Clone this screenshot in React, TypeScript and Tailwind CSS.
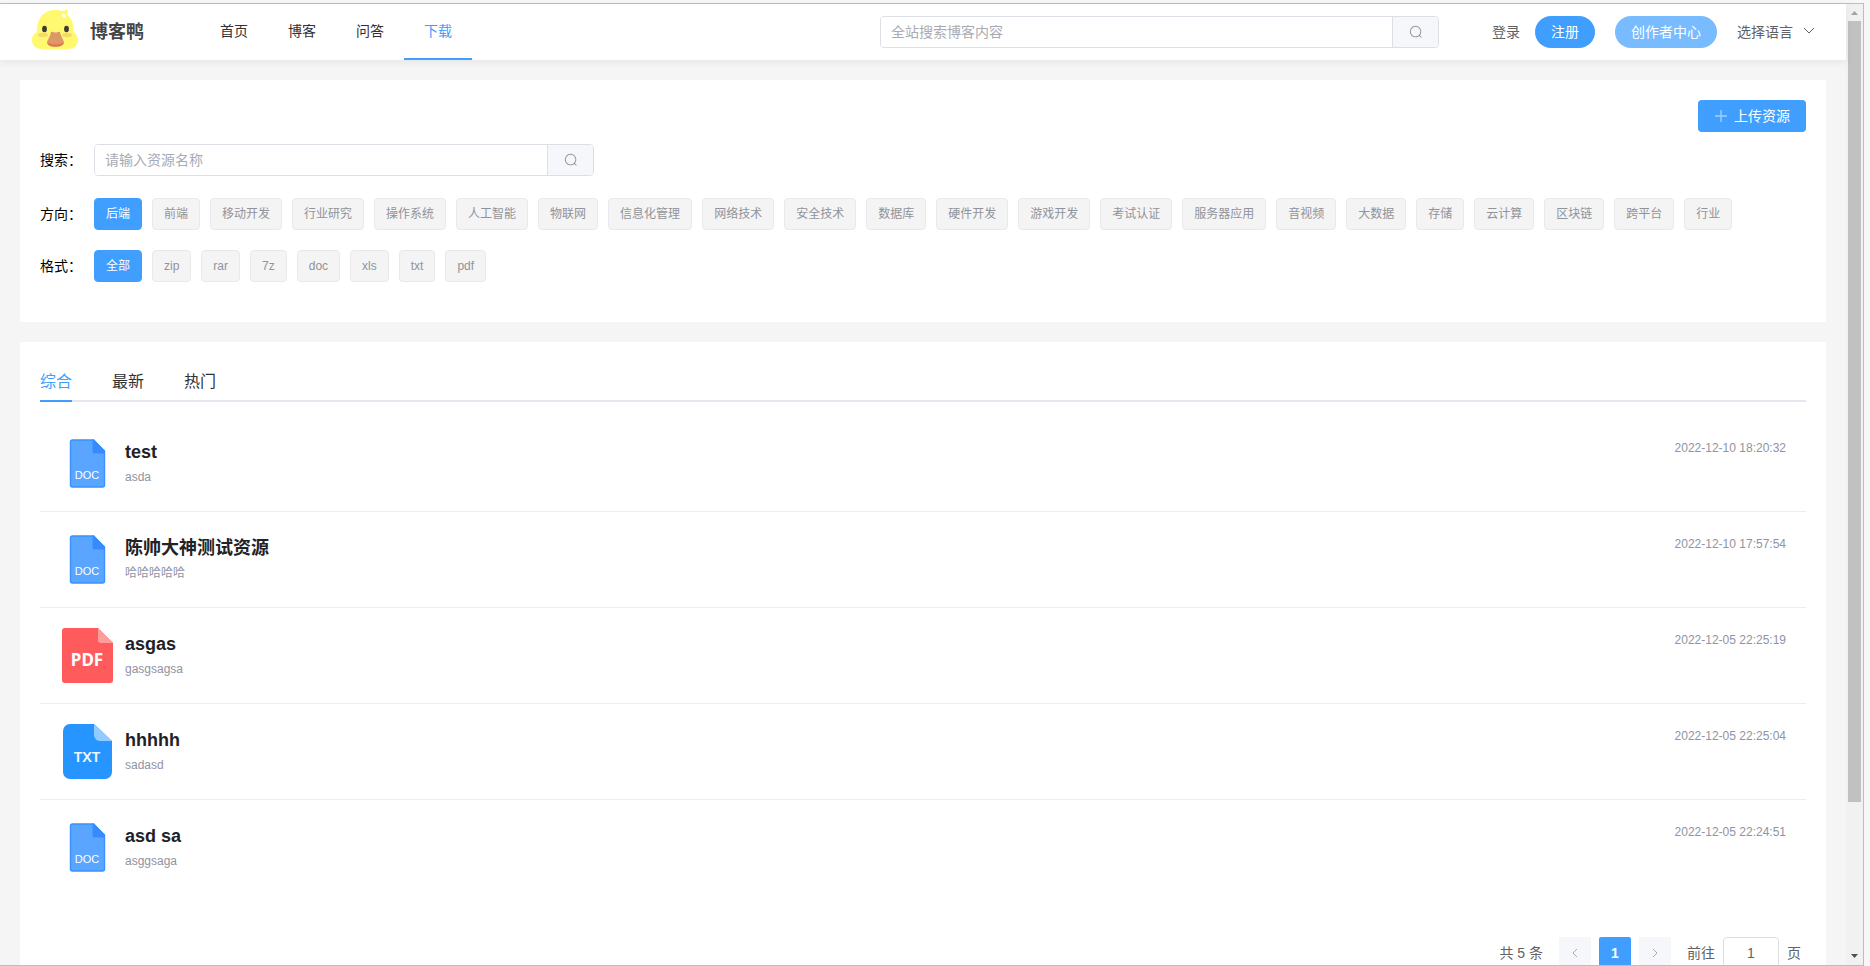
import React, { useState } from 'react';

const directions = [
  '后端', '前端', '移动开发', '行业研究', '操作系统', '人工智能', '物联网', '信息化管理',
  '网络技术', '安全技术', '数据库', '硬件开发', '游戏开发', '考试认证', '服务器应用',
  '音视频', '大数据', '存储', '云计算', '区块链', '跨平台', '行业',
];
const formats = ['全部', 'zip', 'rar', '7z', 'doc', 'xls', 'txt', 'pdf'];
const navs = ['首页', '博客', '问答', '下载'];
const sorts = ['综合', '最新', '热门'];

const resources = [
  { id: 1, type: 'doc', title: 'test', desc: 'asda', time: '2022-12-10 18:20:32' },
  { id: 2, type: 'doc', title: '陈帅大神测试资源', desc: '哈哈哈哈哈', time: '2022-12-10 17:57:54' },
  { id: 3, type: 'pdf', title: 'asgas', desc: 'gasgsagsa', time: '2022-12-05 22:25:19' },
  { id: 4, type: 'txt', title: 'hhhhh', desc: 'sadasd', time: '2022-12-05 22:25:04' },
  { id: 5, type: 'doc', title: 'asd sa', desc: 'asggsaga', time: '2022-12-05 22:24:51' },
];

const DuckLogo: React.FC = () => (
  <svg width="46" height="48" viewBox="0 0 46 48" aria-hidden="true">
    <path
      d="M35 0.5C36 3 36 5 35 6.500C39.500 10 41.700 15 41.500 24C44.500 25.500 46 28.500 46 32C46 37.500 42 41 37 41H9C4 41 0 37.500 0 32C0 28.500 1.500 25.500 5 24C4.300 10 12 2 23 2C26 2 28 2.300 30 3C32 2.800 34 2 35 0.5Z"
      fill="#fff970"
    />
    <path d="M29.500 6.500C31.500 5 34 6.500 34 8.500C33.500 11 30.500 10 29.500 6.500Z" fill="#fff" />
    <ellipse cx="11" cy="27" rx="5" ry="2.200" fill="#fad868" />
    <ellipse cx="35" cy="27" rx="5" ry="2.200" fill="#fad868" />
    <ellipse cx="12.500" cy="21" rx="2.400" ry="3.200" fill="#3c3b34" />
    <ellipse cx="34.500" cy="21" rx="2.400" ry="3.200" fill="#3c3b34" />
    <path d="M19 24C20.500 23 22 24.500 23.500 24.500C25 24.500 26.500 23 28 24C29 28 30 30 31.500 32.500C33 37 28 38.500 23.500 38.500C19 38.500 14 37 15.500 32.500C17 30 18 28 19 24Z" fill="#dd986a" />
    <path d="M15.200 34C18 37.300 29 37.300 31.800 34C32 37.500 28 38.700 23.500 38.700C19 38.700 15 37.500 15.200 34Z" fill="#d97c48" />
  </svg>
);

const SearchIcon: React.FC = () => (
  <svg width="14" height="14" viewBox="0 0 1024 1024" fill="currentColor" aria-hidden="true">
    <path d="m795.904 750.720 124.992 124.928a32 32 0 0 1-45.248 45.248L750.656 795.904a416 416 0 1 1 45.248-45.248zM480 832a352 352 0 1 0 0-704 352 352 0 0 0 0 704z" />
  </svg>
);

const FileIcon: React.FC<{ type: string }> = ({ type }) => {
  if (type === 'pdf') {
    return (
      <svg className="shrink-0" width="55" height="55" viewBox="0 0 55 55" role="img" aria-label="pdf">
        <path d="M5 0H38L53 15V52a3 3 0 0 1-3 3H5a3 3 0 0 1-3-3V3a3 3 0 0 1 3-3Z" fill="#ff5b5c" />
        <path d="M38 0L53 15H41a3 3 0 0 1-3-3Z" fill="#ff9c9c" />
        <text x="27" y="38" textAnchor="middle" fontFamily="'Noto Sans', sans-serif" fontWeight="700" fontSize="17" fill="#fff">PDF</text>
      </svg>
    );
  }
  if (type === 'txt') {
    return (
      <svg className="shrink-0" width="55" height="55" viewBox="0 0 55 55" role="img" aria-label="txt">
        <path d="M10 0H34L52 17V48a7 7 0 0 1-7 7H10a7 7 0 0 1-7-7V7a7 7 0 0 1 7-7Z" fill="#2795ff" />
        <path d="M34 0L52 17H40a6 6 0 0 1-6-6Z" fill="#93caff" />
        <text x="27" y="38" textAnchor="middle" fontFamily="'Noto Sans', sans-serif" fontWeight="600" fontSize="15" fill="#f0f8ff">TXT</text>
      </svg>
    );
  }
  return (
    <svg className="shrink-0" width="55" height="55" viewBox="0 0 55 55" role="img" aria-label="doc">
      <path d="M12.500 4H33.500L44.500 15V49a2 2 0 0 1-2 2H12.500a2 2 0 0 1-2-2V6a2 2 0 0 1 2-2Z" fill="#5aa5ff" stroke="#3c8fff" strokeWidth="1.400" />
      <path d="M32.500 3.500H34L45 15V17.500H34a1.500 1.500 0 0 1-1.500-1.500Z" fill="#368cff" />
      <text x="27" y="43" textAnchor="middle" fontFamily="'Liberation Sans', sans-serif" fontSize="11" fill="#fff">DOC</text>
    </svg>
  );
};

const SearchBox: React.FC<{ id: string; label: string; placeholder: string }> = ({ id, label, placeholder }) => (
  <div className="flex h-8 w-full overflow-hidden rounded border border-[#dcdfe6]">
    <input
      id={id}
      aria-label={label}
      className="min-w-0 flex-1 bg-white px-[10px] text-sm text-[#606266] outline-none placeholder:text-[#a8abb2]"
      placeholder={placeholder}
    />
    <button
      aria-label={label}
      className="flex w-[46px] items-center justify-center border-l border-[#dcdfe6] bg-[#f5f7fa] text-[#909399]"
    >
      <SearchIcon />
    </button>
  </div>
);

interface TagRowProps {
  label: string;
  items: string[];
  value: string;
  onChange: (v: string) => void;
}

const TagRow: React.FC<TagRowProps> = ({ label, items, value, onChange }) => (
  <div className="flex">
    <span className="w-[54px] shrink-0 text-sm leading-8 text-black">{label}</span>
    <div className="flex flex-wrap gap-[10px]">
      {items.map((item) => (
        <button
          key={item}
          onClick={() => onChange(item)}
          className={
            item === value
              ? 'h-8 rounded border border-[#409eff] bg-[#409eff] px-[11px] text-xs text-white'
              : 'h-8 rounded border border-[#e9e9eb] bg-[#f4f4f5] px-[11px] text-xs text-[#909399]'
          }
        >
          {item}
        </button>
      ))}
    </div>
  </div>
);

const Header: React.FC = () => {
  const [active, setActive] = useState('下载');

  return (
    <header className="relative z-10 flex h-14 shrink-0 items-center bg-white pr-[31px] pl-8 shadow-[0_2px_8px_rgba(0,0,0,0.07)]">
      <DuckLogo />
      <span className="ml-3 text-lg font-bold text-[#444]">博客鸭</span>
      <nav className="ml-14 flex h-full">
        {navs.map((nav) => (
          <a
            key={nav}
            href="#"
            onClick={() => setActive(nav)}
            className={
              nav === active
                ? 'flex items-center border-b-2 border-[#409eff] px-5 text-sm text-[#409eff]'
                : 'flex items-center border-b-2 border-transparent px-5 text-sm text-[#303133]'
            }
          >
            {nav}
          </a>
        ))}
      </nav>
      <div className="ml-auto w-[559px]">
        <SearchBox id="site-search" label="全站搜索" placeholder="全站搜索博客内容" />
      </div>
      <a href="#" className="ml-[53px] text-sm text-[#606266]">登录</a>
      <button className="ml-[15px] h-8 rounded-full bg-[#409eff] px-4 text-sm text-white">注册</button>
      <button className="ml-5 h-8 rounded-full bg-[#79bbff] px-4 text-sm text-white">创作者中心</button>
      <button className="ml-5 flex items-center text-sm text-[#606266]">
        选择语言
        <svg className="ml-[10px]" width="12" height="12" viewBox="0 0 12 12" fill="none" stroke="currentColor" aria-hidden="true">
          <path d="M1 2L6 7L11 2" />
        </svg>
      </button>
    </header>
  );
};

const Filters: React.FC = () => {
  const [direction, setDirection] = useState('后端');
  const [format, setFormat] = useState('全部');

  return (
    <section className="bg-white px-5 pt-5 pb-10">
      <div className="flex justify-end">
        <button className="flex h-8 items-center rounded bg-[#409eff] px-4 text-sm text-white">
          <svg className="mr-1.5" width="14" height="14" viewBox="0 0 14 14" stroke="#a0cfff" strokeWidth="1.400" aria-hidden="true">
            <path d="M1 7H13M7 1V13" />
          </svg>
          上传资源
        </button>
      </div>
      <div className="mt-3 flex">
        <label htmlFor="resource-search" className="w-[54px] shrink-0 text-sm leading-8 text-black">搜索：</label>
        <div className="w-[500px]">
          <SearchBox id="resource-search" label="搜索资源" placeholder="请输入资源名称" />
        </div>
      </div>
      <div className="mt-[22px] flex flex-col gap-5">
        <TagRow label="方向：" items={directions} value={direction} onChange={setDirection} />
        <TagRow label="格式：" items={formats} value={format} onChange={setFormat} />
      </div>
    </section>
  );
};

const Pagination: React.FC = () => (
  <div className="mt-[41px] flex h-8 items-center justify-end pr-[5px] text-sm text-[#606266]">
    <span className="mr-4">共 5 条</span>
    <button aria-label="上一页" disabled className="flex h-8 w-8 items-center justify-center rounded-xs bg-[#f5f7fa] text-[#a8abb2]">
      <svg width="12" height="12" viewBox="0 0 12 12" fill="none" stroke="currentColor">
        <path d="M8 2L4 6L8 10" />
      </svg>
    </button>
    <button className="ml-2 h-8 w-8 rounded-xs bg-[#409eff] font-bold text-white">1</button>
    <button aria-label="下一页" disabled className="ml-2 flex h-8 w-8 items-center justify-center rounded-xs bg-[#f5f7fa] text-[#a8abb2]">
      <svg width="12" height="12" viewBox="0 0 12 12" fill="none" stroke="currentColor">
        <path d="M4 2L8 6L4 10" />
      </svg>
    </button>
    <label htmlFor="page-jump" className="ml-4">前往</label>
    <input
      id="page-jump"
      defaultValue="1"
      className="mx-2 h-8 w-14 rounded border border-[#dcdfe6] text-center text-sm text-[#606266] outline-none"
    />
    <span>页</span>
  </div>
);

const ResourceList: React.FC = () => {
  const [sort, setSort] = useState('综合');

  return (
    <section className="mt-5 bg-white p-5">
      <div className="flex h-10 gap-10 shadow-[inset_0_-2px_0_#e4e7ed]">
        {sorts.map((item) => (
          <button
            key={item}
            onClick={() => setSort(item)}
            className={
              item === sort
                ? 'border-b-2 border-[#409eff] pt-0.5 text-base text-[#409eff]'
                : 'border-b-2 border-transparent pt-0.5 text-base text-[#303133]'
            }
          >
            {item}
          </button>
        ))}
      </div>
      <ul className="mt-[14px]">
        {resources.map((r) => (
          <li key={r.id} className="flex border-b border-[#ebeef0] p-5 last:border-transparent">
            <FileIcon type={r.type} />
            <div className="ml-[10px] flex-1 pt-1">
              <a href="#" className="block text-lg leading-6 font-bold text-[#222226]">{r.title}</a>
              <p className="mt-1 text-xs leading-[18px] text-[#8f93a3]">{r.desc}</p>
            </div>
            <time className="text-xs leading-6 text-[#8f93a3]">{r.time}</time>
          </li>
        ))}
      </ul>
      <Pagination />
    </section>
  );
};

const ScrollBar: React.FC = () => (
  <div className="flex w-[17px] shrink-0 flex-col items-center bg-[#f1f1f1]" aria-hidden="true">
    <svg width="17" height="17" viewBox="0 0 17 17" fill="#a3a3a3">
      <path d="M5 11L8.500 7L12 11Z" />
    </svg>
    <div className="flex w-[13px] flex-1 flex-col">
      <div className="h-[84.2%] bg-[#c1c1c1]" />
    </div>
    <svg width="17" height="17" viewBox="0 0 17 17" fill="#505050">
      <path d="M5 6L12 6L8.500 10Z" />
    </svg>
  </div>
);

const Download: React.FC = () => (
  <div className="h-screen bg-[#f7f7f7] pt-[3px] pr-[6px] font-['Liberation_Sans','Noto_Sans_CJK_SC',sans-serif]">
    <div className="flex h-full border-t border-r border-b border-[#bdbdbd]">
      <div className="flex min-w-0 flex-1 flex-col bg-[#f5f5f5]">
        <Header />
        <main className="min-h-0 flex-1 overflow-y-auto p-5 [scrollbar-width:none]">
          <Filters />
          <ResourceList />
        </main>
      </div>
      <ScrollBar />
    </div>
  </div>
);

export default Download;
